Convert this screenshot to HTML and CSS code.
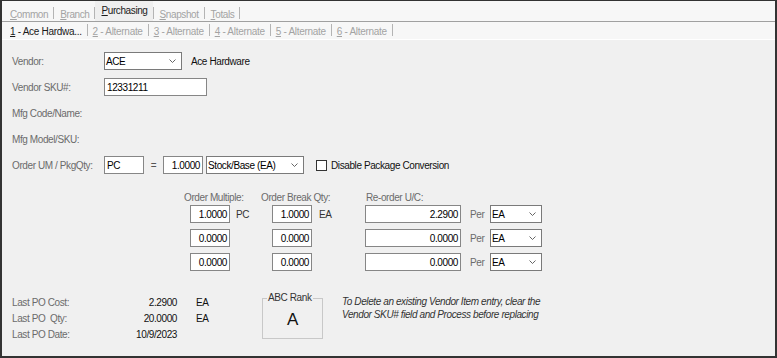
FILE: index.html
```html
<!DOCTYPE html>
<html lang="en">
<head>
    <meta charset="UTF-8">
    <meta name="viewport" content="width=device-width, initial-scale=1.0">
    <link rel="stylesheet" href="styles.css">
    <title>Vendor Item - Purchasing</title>
</head>
<body>
    <div class="frame">
        <div class="tabs tabs-main">
            <span class="tab"><u>C</u>ommon</span><span class="sep"></span>
            <span class="tab"><u>B</u>ranch</span><span class="sep"></span>
            <span class="tab active"><u>P</u>urchasing</span><span class="sep"></span>
            <span class="tab"><u>S</u>napshot</span><span class="sep"></span>
            <span class="tab"><u>T</u>otals</span><span class="sep"></span>
        </div>
        <div class="tabs tabs-sub">
            <span class="tab active"><u>1</u> - Ace Hardwa...</span><span class="sep"></span>
            <span class="tab"><u>2</u> - Alternate</span><span class="sep"></span>
            <span class="tab"><u>3</u> - Alternate</span><span class="sep"></span>
            <span class="tab"><u>4</u> - Alternate</span><span class="sep"></span>
            <span class="tab"><u>5</u> - Alternate</span><span class="sep"></span>
            <span class="tab"><u>6</u> - Alternate</span><span class="sep"></span>
        </div>

        <div class="panel">
            <div class="row">
                <span class="label">Vendor:</span>
                <div class="box combo w-vendor"><span>ACE</span><svg class="chev" width="7" height="4" viewBox="0 0 7 4"><polyline points="0.5,0.5 3.5,3.5 6.5,0.5" /></svg></div>
                <span class="after-text">Ace Hardware</span>
            </div>
            <div class="row">
                <span class="label">Vendor SKU#:</span>
                <div class="box w-sku">12331211</div>
            </div>
            <div class="row">
                <span class="label">Mfg Code/Name:</span>
            </div>
            <div class="row">
                <span class="label">Mfg Model/SKU:</span>
            </div>
            <div class="row">
                <span class="label">Order UM / PkgQty:</span>
                <div class="box w-num">PC</div>
                <span class="equals">=</span>
                <div class="box w-num num">1.0000</div>
                <div class="box combo w-stock"><span>Stock/Base (EA)</span><svg class="chev" width="7" height="4" viewBox="0 0 7 4"><polyline points="0.5,0.5 3.5,3.5 6.5,0.5" /></svg></div>
                <span class="check"></span>
                <span class="check-label">Disable Package Conversion</span>
            </div>

            <div class="qty-grid">
                <span class="head head-mult">Order Multiple:</span>
                <span class="head head-break">Order Break Qty:</span>
                <span class="head head-uc">Re-order U/C:</span>

                <div class="box num">1.0000</div><span class="unit">PC</span>
                <div class="box num">1.0000</div><span class="unit unit-ea">EA</span>
                <div class="box num">2.2900</div><span class="per">Per</span>
                <div class="box combo"><span>EA</span><svg class="chev" width="7" height="4" viewBox="0 0 7 4"><polyline points="0.5,0.5 3.5,3.5 6.5,0.5" /></svg></div>

                <div class="box num">0.0000</div><span class="unit"></span>
                <div class="box num">0.0000</div><span class="unit"></span>
                <div class="box num">0.0000</div><span class="per">Per</span>
                <div class="box combo"><span>EA</span><svg class="chev" width="7" height="4" viewBox="0 0 7 4"><polyline points="0.5,0.5 3.5,3.5 6.5,0.5" /></svg></div>

                <div class="box num">0.0000</div><span class="unit"></span>
                <div class="box num">0.0000</div><span class="unit"></span>
                <div class="box num">0.0000</div><span class="per">Per</span>
                <div class="box combo"><span>EA</span><svg class="chev" width="7" height="4" viewBox="0 0 7 4"><polyline points="0.5,0.5 3.5,3.5 6.5,0.5" /></svg></div>
            </div>

            <div class="bottom">
                <div class="last-po">
                    <span class="label">Last PO Cost:</span><span class="value">2.2900</span><span class="po-unit">EA</span>
                    <span class="label">Last PO &nbsp;Qty:</span><span class="value">20.0000</span><span class="po-unit">EA</span>
                    <span class="label">Last PO Date:</span><span class="value">10/9/2023</span><span class="po-unit"></span>
                </div>
                <div class="group">
                    <span class="group-title">ABC Rank</span>
                    <span class="rank">A</span>
                </div>
                <p class="note">To Delete an existing Vendor Item entry, clear the<br>Vendor SKU# field and Process before replacing</p>
            </div>
        </div>
    </div>
</body>
</html>
```

FILE: styles.css
```css
* { box-sizing: border-box; }
body {
    margin: 0;
    font-family: "Liberation Sans", Arial, sans-serif;
    font-size: 10px;
    letter-spacing: -0.4px;
    color: #111;
}
.frame {
    width: 777px;
    height: 358px;
    border: 2px solid #333;
    border-top-width: 1px;
    background: #f0f0f0;
    overflow: hidden;
}

/* tab strips */
.tabs {
    display: flex;
    align-items: flex-end;
    background: #f7f7f7;
    padding-left: 2px;
}
.tabs-main {
    height: 21px;
    border-bottom: 1px solid #a0a0a0;
}
.tabs-sub {
    height: 18px;
    padding-left: 3px;
    padding-bottom: 1px;
    border-bottom: 1px solid #fff;
    letter-spacing: -0.3px;
}
.tab {
    padding: 0 5px 0 6px;
    line-height: 13px;
    color: #a3a3a3;
}
.tabs-sub .tab { padding: 0 5px; }
.tab.active { color: #1a1a1a; }
.tabs-main .tab.active {
    background: #efefef;
    line-height: 20px;
}
.sep {
    width: 1px;
    height: 12px;
    margin-bottom: 2px;
    background: #b4b4b4;
}

/* form */
.panel { padding: 12px 0 0 10px; }
.row {
    display: flex;
    align-items: center;
    height: 18px;
    margin-bottom: 8px;
}
.label {
    width: 92px;
    color: #6b6b6b;
}
.box {
    display: flex;
    align-items: center;
    height: 18px;
    padding: 0 2px;
    background: #fff;
    border: 1px solid #868686;
    color: #000;
    white-space: nowrap;
}
.box.num { justify-content: flex-end; }
.combo {
    justify-content: space-between;
    border-color: #7a7a7a;
    padding: 0 5px 0 1px;
}
.chev {
    fill: none;
    stroke: #555;
    stroke-width: 0.9;
}
.w-vendor { width: 78px; }
.w-sku { width: 103px; }
.w-num { width: 40px; }
.w-stock { width: 98px; margin-left: 3px; }
.after-text { margin-left: 9px; }
.equals {
    width: 19px;
    text-align: center;
    color: #555;
}
.check {
    width: 11px;
    height: 11px;
    margin-left: 12px;
    background: #fff;
    border: 1px solid #333;
}
.check-label { margin-left: 4px; }

/* order quantities */
.qty-grid {
    display: grid;
    grid-template-columns: 40px 42px 40px 53px 96px 29px 52px;
    grid-template-rows: 12px repeat(3, 18px);
    row-gap: 6px;
    margin: 13px 0 0 178px;
    align-items: center;
}
.head {
    color: #6b6b6b;
    white-space: nowrap;
    align-self: end;
    margin-bottom: -4px;
}
.head-mult { grid-column: 1 / 3; margin-left: -6px; }
.head-break { grid-column: 3 / 5; margin-left: -11px; }
.head-uc { grid-column: 5 / 8; margin-left: 1px; }
.unit { padding-left: 6px; color: #333; }
.unit-ea { padding-left: 7px; }
.per { padding-left: 9px; color: #6b6b6b; }

/* last po info */
.bottom {
    display: flex;
    align-items: flex-start;
    margin-top: 24px;
}
.last-po {
    display: grid;
    grid-template-columns: 120px 45px 85px;
    line-height: 16px;
}
.last-po .label { width: auto; }
.value { text-align: right; }
.po-unit { padding-left: 19px; }
.group {
    position: relative;
    width: 61px;
    height: 41px;
    margin-top: 3px;
    border: 1px solid #c8c8c8;
    display: flex;
    align-items: center;
    justify-content: center;
}
.group-title {
    position: absolute;
    top: -7px;
    left: 4px;
    padding: 0 1px;
    background: #f0f0f0;
    color: #333;
}
.rank {
    font-size: 17px;
    padding-top: 3px;
    color: #111;
}
.note {
    margin: 0 0 0 19px;
    font-style: italic;
    line-height: 13px;
    color: #333;
}
```
